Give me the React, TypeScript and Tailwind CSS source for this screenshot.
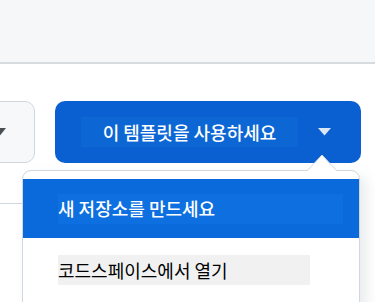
export default function App() {
  const font = { fontFamily: '"Noto Sans CJK KR", "Noto Sans", sans-serif' }
  return (
    <div className="relative h-[302px] w-[375px] overflow-hidden bg-white" style={font}>
      {/* Top bar */}
      <div className="h-[64px] border-b-2 border-[#d6dbdf] bg-[#f6f7f9]" />

      {/* Button row */}
      <div className="ml-[-30px] mt-[37px] flex items-center gap-[20px]">
        <div className="flex h-[62px] w-[65px] items-center justify-start rounded-[10px] border border-[#d0d7de] bg-[#f6f8fa] pl-[26px]">
          <svg width="13" height="9" viewBox="0 0 13 9" className="-ml-[4px]">
            <path d="M0 0h13L6.5 8z" fill="#4a4f55" />
          </svg>
        </div>
        <div className="flex h-[62px] w-[306px] items-center rounded-[10px] bg-[#0a60d0] pl-[26px] pr-[30px]">
          <span className="flex h-[30px] w-[217px] items-center justify-center bg-[#0c66d4] text-[18px] font-medium text-white">
            이 템플릿을 사용하세요
          </span>
          <svg width="13" height="8" viewBox="0 0 13 8" className="ml-auto">
            <path d="M0 0h13L6.5 7.5z" fill="#dbe7f7" />
          </svg>
        </div>
      </div>

      {/* Background line */}
      <div className="absolute left-0 top-[203px] h-px w-[22px] bg-[#d0d7de]" />

      {/* Pointer */}
      <svg width="30" height="17" viewBox="0 0 30 17" className="absolute left-[307px] top-[154px] z-10">
        <path d="M0 17L15 1l15 16" fill="white" stroke="#d0d7de" strokeWidth="1" />
      </svg>

      {/* Dropdown */}
      <div className="absolute left-[22px] top-[170px] w-[338px] rounded-[9px] border border-[#d0d7de] bg-white pb-[40px] pt-[8px] shadow-[6px_6px_14px_rgba(140,149,159,0.2)]">
        <div className="flex h-[59px] items-center bg-[#0b6adb] pl-[35px]">
          <span className="flex h-[30px] w-[285px] items-center bg-[#0d6fe0] text-[18px] font-medium text-white">
            새 저장소를 만드세요
          </span>
        </div>
        <div className="flex h-[64px] items-center pl-[35px]">
          <span className="flex h-[30px] w-[252px] items-center bg-[#f1f1f1] text-[18px] text-black">
            코드스페이스에서 열기
          </span>
        </div>
      </div>
    </div>
  )
}
